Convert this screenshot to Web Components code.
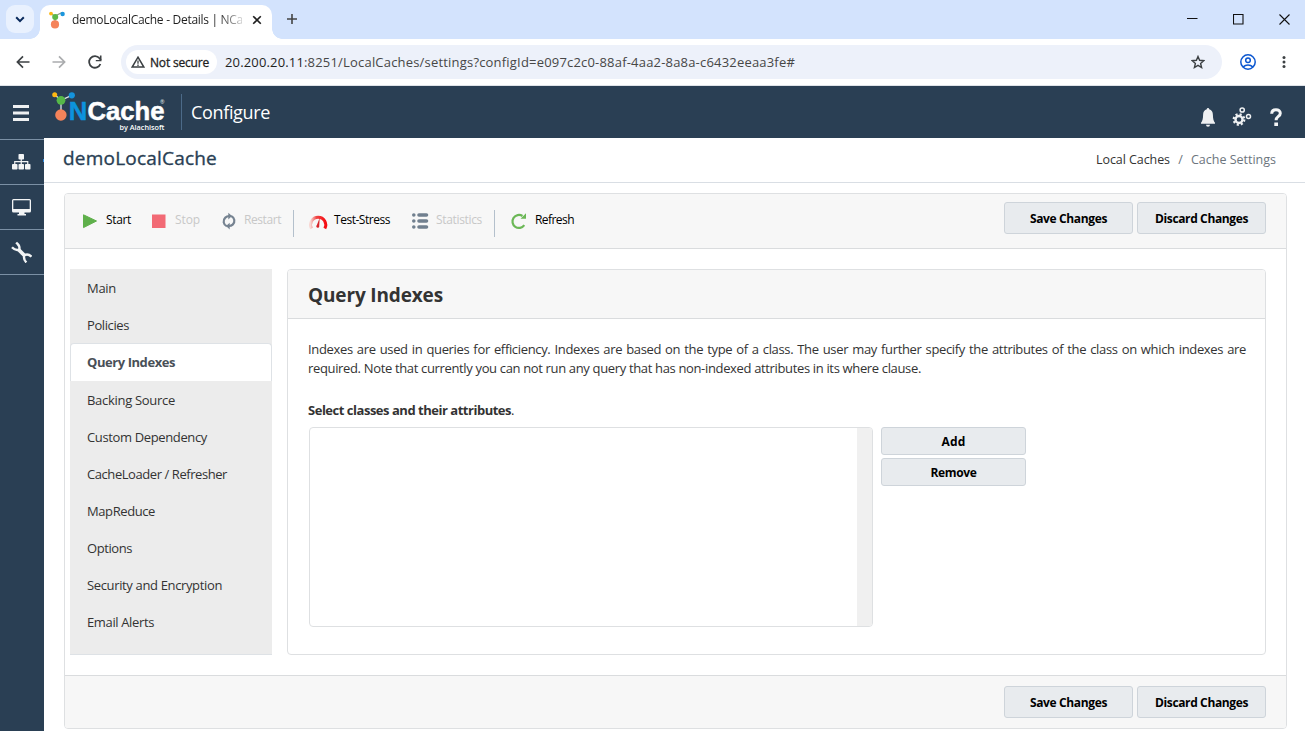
<!DOCTYPE html>
<html lang="en">
<head>
<meta charset="utf-8">
<title>demoLocalCache - Details | NCache</title>
<style>
  html, body {
    margin: 0;
    height: 731px;
    overflow: hidden;
    background: #fff;
  }

  body {
    display: flex;
    flex-direction: column;
    font-family: "Open Sans", "Noto Sans", sans-serif;
    font-size: 13px;
    color: #333;
  }
</style>
</head>
<body>
<browser-tabs></browser-tabs>
<browser-toolbar></browser-toolbar>
<cache-app></cache-app>

<script>
const icons = {
  chevron: `<svg width="10" height="7" viewBox="0 0 10 7"><path d="M1.2 1.3 5 5.1 8.8 1.3" fill="none" stroke="#0a2a5c" stroke-width="2"/></svg>`,
  favicon: `<svg width="18" height="18" viewBox="0 0 18 18"><path d="M2.5 2.5 7 5l7-3.5M7 5v9" stroke="#8a9a8a" stroke-width="1.3" fill="none"/><circle cx="3" cy="2.6" r="1.9" fill="#fdb813"/><circle cx="14.6" cy="3" r="2.2" fill="#1b96dd"/><circle cx="7.2" cy="6" r="3" fill="#5cb947"/><circle cx="7" cy="13.4" r="4.1" fill="#f5835a"/></svg>`,
  close: `<svg width="10" height="10" viewBox="0 0 10 10"><path d="m1.2 1.2 7.6 7.6m0-7.6L1.2 8.8" stroke="#1f1f1f" stroke-width="1.6"/></svg>`,
  plus: `<svg width="12" height="12" viewBox="0 0 12 12"><path d="M6 1v10M1 6h10" stroke="#444" stroke-width="1.6"/></svg>`,
  winMin: `<svg width="11" height="11" viewBox="0 0 11 11"><path d="M0 4.5h10.5" stroke="#111"/></svg>`,
  winMax: `<svg width="11" height="11" viewBox="0 0 11 11"><path d="M.5.5h9.5v9.5H.5z" fill="none" stroke="#111" stroke-width="1.1"/></svg>`,
  winClose: `<svg width="11" height="11" viewBox="0 0 11 11"><path d="m.5.5 10 10m0-10-10 10" stroke="#111" stroke-width="1.1"/></svg>`,
  back: `<svg width="14" height="14" viewBox="0 0 14 14"><path d="M13.5 7H1.5M7 1.4 1.4 7 7 12.6" fill="none" stroke="#3c4043" stroke-width="1.7"/></svg>`,
  forward: `<svg width="14" height="14" viewBox="0 0 14 14"><path d="M.5 7h12M7 1.4 12.6 7 7 12.6" fill="none" stroke="#aaacae" stroke-width="1.7"/></svg>`,
  reload: `<svg width="14" height="14" viewBox="0 0 14 14"><path d="M12.4 9A5.8 5.8 0 1 1 11.5 3.3L13 5" fill="none" stroke="#3c4043" stroke-width="1.8"/><path d="M13.5.5v5.8H7.8V4.9h4.1V.5z" fill="#3c4043"/></svg>`,
  warning: `<svg width="14" height="12" viewBox="0 0 14 12"><path d="M7 1.2 12.8 11H1.2z" fill="none" stroke="#3c4043" stroke-width="1.5"/><path d="M7 4.4v3.4M7 8.5V10" stroke="#3c4043" stroke-width="1.3"/></svg>`,
  star: `<svg width="14" height="14" viewBox="0 0 14 14"><path d="m7 1.5 1.6 3.8 4.2.4-3.2 2.7 1 4.1L7 10.4l-3.6 2.1 1-4.1L1.2 5.7l4.2-.4z" fill="none" stroke="#3c4043" stroke-width="1.4"/></svg>`,
  profile: `<svg width="16" height="16" viewBox="0 0 16 16"><g fill="none" stroke="#0b57d0" stroke-width="1.5"><circle cx="8" cy="8" r="7.2"/><circle cx="8" cy="6.3" r="2.3"/><path d="M3.2 12.9c2.7-2.5 6.9-2.5 9.6 0"/></g></svg>`,
  dots: `<svg width="4" height="12" viewBox="0 0 4 12" fill="#3c4043"><circle cx="2" cy="1.5" r="1.5"/><circle cx="2" cy="6" r="1.5"/><circle cx="2" cy="10.5" r="1.5"/></svg>`,
  menu: `<svg width="16" height="17" viewBox="0 0 16 17"><path d="M0 1.5h16M0 8h16M0 14.5h16" stroke="#eef0f2" stroke-width="3"/></svg>`,
  bell: `<svg width="14" height="19" viewBox="0 0 14 19" fill="#eef0f2"><path d="M7 0c.8 0 1.2.6 1.2 1.3 2.5.6 3.7 2.7 3.7 5.4 0 4.3.8 6.3 2.1 8.1v1H0v-1c1.3-1.8 2.1-3.8 2.1-8.1 0-2.7 1.2-4.8 3.7-5.4C5.8.6 6.2 0 7 0z"/><path d="M5 16.7h4a2 2 0 0 1-4 0z"/></svg>`,
  cogs: `<svg width="20" height="20" viewBox="0 0 20 20"><g fill="none" stroke="#eef0f2"><circle cx="7" cy="12.5" r="3.5" stroke-width="2.4"/><circle cx="7" cy="12.5" r="5.3" stroke-width="2.2" stroke-dasharray="2.08 2.08"/><circle cx="10.2" cy="3" r="2.1" stroke-width="1.5"/><circle cx="16.5" cy="9.5" r="2" stroke-width="1.5"/></g></svg>`,
  help: `<svg width="12" height="19" viewBox="0 0 12 19"><path d="M1.7 5.7C1.8 3 3.5 1.7 6 1.7s4.3 1.3 4.3 3.5c0 3.4-4.2 3-4.2 7" fill="none" stroke="#f4f5f6" stroke-width="3"/><path d="M4.3 14.5H8V18H4.3z" fill="#f4f5f6"/></svg>`,
  sitemap: `<svg width="19" height="16" viewBox="0 0 19 16"><g fill="#f2f4f5"><rect x="6.5" width="5.5" height="5.5" rx=".8"/><rect x="0" y="10" width="5.5" height="5.5" rx=".8"/><rect x="6.5" y="10" width="5.5" height="5.5" rx=".8"/><rect x="13" y="10" width="5.5" height="5.5" rx=".8"/></g><path d="M9.250 5v6M2.750 11V7.7h13V11" fill="none" stroke="#f2f4f5" stroke-width="1.2"/></svg>`,
  monitor: `<svg width="19" height="17" viewBox="0 0 19 17"><path d="M1.5 0h16A1.5 1.5 0 0 1 19 1.5V12a1.5 1.5 0 0 1-1.5 1.5h-5V15H14v1.4H5.5V15H7v-1.5H1.5A1.5 1.5 0 0 1 0 12V1.5A1.5 1.5 0 0 1 1.5 0z" fill="#f2f4f5"/><path d="M1.3 1.3h16.4V10H1.3z" fill="#2a3f54"/></svg>`,
  tools: `<svg width="21" height="22" viewBox="0 0 21 22"><g fill="none" stroke="#f2f4f5" stroke-linejoin="round"><path d="m7.5 8.5 6 6" stroke-width="3.8"/><path d="M5.2 1.5C7 3.500 9.300 4.400 8.300 8.500 5.600 9.600 3.500 8.900 1 6.200" stroke-width="2.4"/><path d="M20.400 15.700c-2.300-2.500-4.400-2.900-7-1.500-.9 2.800-.5 5 2 7.200" stroke-width="2.4"/></g></svg>`,
  play: `<svg width="24" height="24" viewBox="0 0 24 24"><path d="M5.5 5.8 18.5 12 5.5 18.6z" fill="#5fb04b" stroke="#5fb04b" stroke-linejoin="round"/></svg>`,
  stop: `<svg width="24" height="24" viewBox="0 0 24 24"><path d="M5 5.5h13.500V19H5z" fill="#f26a75"/></svg>`,
  restart: `<svg width="24" height="24" viewBox="0 0 24 24"><g transform="translate(1 0)"><g fill="none" stroke="#768391" stroke-width="2.2"><path d="M9.8 17.3A5.3 5.3 0 0 1 8.3 8.6c1.1-1 2.3-1.4 3.8-1.4"/><path d="M14.2 6.9a5.3 5.3 0 0 1 1.5 8.7c-1.1 1-2.3 1.4-3.8 1.4"/></g><path d="M11.3 3.7 15 7.1l-3.7 3.3zM12.7 20.5 9 17.1l3.7-3.3z" fill="#768391"/></g></svg>`,
  gauge: `<svg width="24" height="24" viewBox="0 0 24 24"><defs><linearGradient id="g"><stop offset="0" stop-color="#f8d8d4"/><stop offset=".4" stop-color="#f04444"/><stop offset="1" stop-color="#f60d12"/></linearGradient></defs><path d="M5.500 19.500A7.600 7.600 0 1 1 18.800 19.500" fill="none" stroke="url(#g)" stroke-width="3"/><path d="m13.700 8.800-.5 8.100a1.500 1.500 0 1 1-2.300-.8z" fill="#d8262b"/></svg>`,
  list: `<svg width="24" height="24" viewBox="0 0 24 24"><g stroke="#71808f" stroke-width="3.6" stroke-linecap="round"><path d="M5.8 6h.01M5.8 12h.01M5.8 18h.01"/><path d="M11 6h7.500M11 12h7.500M11 18h7.500"/></g></svg>`,
  refresh: `<svg width="24" height="24" viewBox="0 0 24 24"><path d="M17.300 16.200A6.500 6.500 0 1 1 15.500 7" fill="none" stroke="#6cb857" stroke-width="2.2"/><path d="M19 4.300v5.500h-5.500z" fill="#6cb857"/></svg>`,
  logo: `<svg width="116" height="44" viewBox="50 90 116 44">
    <path d="m54.7 94.7 6.3 5.6 10.700-5M61 100v14" fill="none" stroke="#dfe5e8" stroke-width="1.3"/>
    <circle cx="54.7" cy="94.7" r="2.5" fill="#fdb813"/><circle cx="71.8" cy="95.3" r="3.1" fill="#1493dc"/>
    <circle cx="61" cy="100.3" r="4.4" fill="#56b848"/><circle cx="60.9" cy="115" r="5.7" fill="#f5835a"/>
    <g font-family="Liberation Sans, sans-serif" font-weight="bold" stroke-width=".5">
      <text x="68.7" y="119.700" font-size="25.500" fill="#0c93dd" stroke="#0c93dd" textLength="18.500" lengthAdjust="spacingAndGlyphs">N</text>
      <text x="87.5" y="119.700" font-size="25" fill="#fff" stroke="#fff" textLength="77" lengthAdjust="spacingAndGlyphs">Cache</text>
    </g>
    <text x="160.300" y="104" font-family="Liberation Sans, sans-serif" font-size="5.5" fill="#fff">®</text>
    <text x="119.500" y="130" font-family="Open Sans, sans-serif" font-weight="600" font-size="7.500" fill="#fff" textLength="45" lengthAdjust="spacingAndGlyphs">by Alachisoft</text>
  </svg>`,
};

// Single line of text whose tracking is adjusted to the width in its "w" attribute
class FitText extends HTMLElement {
  constructor() {
    super();
    this.attachShadow({ mode: "open" }).innerHTML =
      `<style>:host { display: inline-block; white-space: nowrap; flex: none; }</style><slot></slot>`;
  }

  connectedCallback() {
    const target = Number(this.getAttribute("w"));
    const natural = this.getBoundingClientRect().width;
    const count = this.textContent.length;
    if (target && natural) {
      this.style.letterSpacing = (target - natural) / count + "px";
    }
  }
}

class AppIcon extends HTMLElement {
  constructor() {
    super();
    this.attachShadow({ mode: "open" });
  }

  connectedCallback() {
    this.shadowRoot.innerHTML = `
      <style>
        :host { display: inline-flex; flex: none; }
        svg { display: block; }
      </style>
      ${icons[this.getAttribute("name")]}`;
  }
}

class BrowserTabs extends HTMLElement {
  constructor() {
    super();
    this.attachShadow({ mode: "open" }).innerHTML = `
      <style>
        :host {
          display: flex;
          flex: none;
          height: 39px;
          background: #d3e3fd;
          color: #1f1f1f;
          font-size: 12px;
          --tab: #fff;
        }
        .search {
          display: flex;
          align-items: center;
          justify-content: center;
          width: 28px;
          height: 28px;
          margin: 5px 6px 0;
          border-radius: 9px;
          background: #e9f1fe;
        }
        .tab {
          display: flex;
          align-items: center;
          box-sizing: border-box;
          position: relative;
          width: 232px;
          height: 34px;
          margin-top: 5px;
          padding: 0 10px 5px 8px;
          border-radius: 10px 10px 0 0;
          background: var(--tab);
        }
        /* curved feet of the active tab */
        .tab::before, .tab::after {
          content: "";
          position: absolute;
          bottom: 0;
          width: 10px;
          height: 10px;
        }
        .tab::before { left: -10px; background: radial-gradient(circle at 0 0, transparent 9.5px, var(--tab) 10px); }
        .tab::after { right: -10px; background: radial-gradient(circle at 100% 0, transparent 9.5px, var(--tab) 10px); }
        .title {
          width: 170px;
          margin: 0 10px 0 6px;
          overflow: hidden;
          -webkit-mask-image: linear-gradient(90deg, #000 146px, transparent 176px);
          mask-image: linear-gradient(90deg, #000 146px, transparent 176px);
        }
        .plus { margin: 13px 0 0 14px; }
        .window {
          display: flex;
          gap: 35px;
          margin: 14px 15px 0 auto;
        }
      </style>
      <div class="search"><app-icon name="chevron"></app-icon></div>
      <div class="tab">
        <app-icon name="favicon"></app-icon>
        <div class="title"><fit-text w="171">demoLocalCache - Details | NCa</fit-text></div>
        <app-icon name="close"></app-icon>
      </div>
      <app-icon class="plus" name="plus"></app-icon>
      <div class="window">
        <app-icon name="winMin"></app-icon>
        <app-icon name="winMax"></app-icon>
        <app-icon name="winClose"></app-icon>
      </div>`;
  }
}

class BrowserToolbar extends HTMLElement {
  constructor() {
    super();
    this.attachShadow({ mode: "open" }).innerHTML = `
      <style>
        :host {
          display: flex;
          align-items: center;
          flex: none;
          box-sizing: border-box;
          height: 47px;
          padding: 0 19px 0 16px;
          border-bottom: 1px solid #dfe3e8;
          background: #fff;
        }
        .nav { display: flex; gap: 22px; width: 105px; }
        .omnibox {
          display: flex;
          align-items: center;
          box-sizing: border-box;
          width: 1101px;
          height: 34px;
          padding: 0 17px 0 5px;
          border-radius: 17px;
          background: #edf1fa;
          color: #474747;
        }
        .chip {
          display: flex;
          align-items: center;
          gap: 5px;
          box-sizing: border-box;
          width: 91px;
          height: 24px;
          margin-right: 8px;
          padding-left: 5px;
          border-radius: 12px;
          background: #fff;
          color: #1f1f1f;
          font-size: 12px;
          -webkit-text-stroke: 0.3px;
        }
        .host { color: #1f1f1f; }
        .star { margin-left: auto; }
        .profile { margin: 0 26px 0 18px; }
      </style>
      <div class="nav">
        <app-icon name="back"></app-icon>
        <app-icon name="forward"></app-icon>
        <app-icon name="reload"></app-icon>
      </div>
      <div class="omnibox">
        <div class="chip"><app-icon name="warning"></app-icon><fit-text w="59">Not secure</fit-text></div>
        <fit-text class="host" w="79">20.200.20.11</fit-text><fit-text w="491">:8251/LocalCaches/settings?configId=e097c2c0-88af-4aa2-8a8a-c6432eeaa3fe#</fit-text>
        <app-icon class="star" name="star"></app-icon>
      </div>
      <app-icon class="profile" name="profile"></app-icon>
      <app-icon name="dots"></app-icon>`;
  }
}

class AppHeader extends HTMLElement {
  constructor() {
    super();
    this.attachShadow({ mode: "open" }).innerHTML = `
      <style>
        :host {
          display: flex;
          align-items: center;
          flex: none;
          box-sizing: border-box;
          height: 52px;
          padding: 0 23px 0 13px;
          background: #2a3f54;
          color: #fff;
          font-size: 18px;
        }
        .menu { margin: 2px 21px 0 0; }
        .title {
          display: flex;
          align-items: center;
          height: 36px;
          margin-left: 15px;
          padding-left: 9px;
          border-left: 1px solid #4c6a88;
        }
        .right {
          display: flex;
          align-items: center;
          gap: 17px;
          margin: 10px 0 0 auto;
        }
        .help { margin-left: 1px; }
      </style>
      <app-icon class="menu" name="menu"></app-icon>
      <app-icon name="logo"></app-icon>
      <div class="title"><fit-text w="79">Configure</fit-text></div>
      <div class="right">
        <app-icon name="bell"></app-icon>
        <app-icon name="cogs"></app-icon>
        <app-icon class="help" name="help"></app-icon>
      </div>`;
  }
}

class SideNav extends HTMLElement {
  constructor() {
    super();
    this.attachShadow({ mode: "open" }).innerHTML = `
      <style>
        :host {
          display: flex;
          flex-direction: column;
          flex: none;
          box-sizing: border-box;
          width: 44px;
          padding-top: 1px;
          background: #2a3f54;
        }
        div {
          display: flex;
          align-items: center;
          justify-content: center;
          box-sizing: border-box;
          height: 45px;
          padding-right: 2px;
          border-top: 1px solid #7b90a5;
        }
        div:last-child { height: 1px; }
        /* marks the section that is open */
        .open { position: relative; }
        .open::after {
          content: "";
          position: absolute;
          top: 19px;
          right: 0;
          width: 1px;
          height: 3px;
          background: #2f8be0;
        }
      </style>
      <div class="open"><app-icon name="sitemap"></app-icon></div>
      <div><app-icon name="monitor"></app-icon></div>
      <div><app-icon name="tools"></app-icon></div>
      <div></div>`;
  }
}

class PageTitle extends HTMLElement {
  constructor() {
    super();
    this.attachShadow({ mode: "open" }).innerHTML = `
      <style>
        :host {
          display: flex;
          align-items: center;
          flex: none;
          box-sizing: border-box;
          height: 45px;
          padding: 0 29px 2px 19px;
          border-bottom: 1px solid #d9dee4;
          color: #2a3f54;
        }
        .name {
          margin-bottom: 2px;
          font-size: 19px;
          -webkit-text-stroke: 0.35px;
        }
        .crumbs { display: flex; margin-left: auto; font-size: 12.5px; color: #333; }
        .crumbs span { width: 21px; text-align: center; color: #6c757d; }
        .crumbs .current { color: #6c757d; }
      </style>
      <fit-text class="name" w="154">demoLocalCache</fit-text>
      <div class="crumbs">
        <fit-text w="74">Local Caches</fit-text><span>/</span><fit-text class="current" w="85">Cache Settings</fit-text>
      </div>`;
  }
}

class ActionButton extends HTMLElement {
  constructor() {
    super();
    this.attachShadow({ mode: "open" }).innerHTML = `
      <style>
        :host { display: inline-flex; width: 129px; height: 32px; }
        button {
          width: 100%;
          height: 100%;
          padding: 0;
          border: 1px solid #ced4da;
          border-radius: 3px;
          background: #e8ebee;
          color: #000;
          font: bold 12px "Open Sans", "Noto Sans", sans-serif;
        }
      </style>
      <button><slot></slot></button>`;
  }
}

class ToolItem extends HTMLElement {
  constructor() {
    super();
    this.attachShadow({ mode: "open" });
  }

  connectedCallback() {
    this.shadowRoot.innerHTML = `
      <style>
        :host {
          display: flex;
          align-items: center;
          gap: 4px;
          height: 24px;
          color: #000;
          font-size: 12px;
        }
        :host([disabled]) { color: #c8c8c8; }
        .label { padding-bottom: 2px; }
      </style>
      <app-icon name="${this.getAttribute("icon")}"></app-icon>
      <div class="label"><slot></slot></div>`;
  }
}

class SettingsToolbar extends HTMLElement {
  constructor() {
    super();
    this.attachShadow({ mode: "open" }).innerHTML = `
      <style>
        :host {
          display: flex;
          box-sizing: border-box;
          height: 55px;
          padding: 8px 20px 0 13px;
          border-bottom: 1px solid #dadcde;
          background: #f7f7f7;
        }
        .tools { display: flex; align-items: center; height: 37px; }
        .tools > * { flex: none; }
        .tools i { width: 1px; height: 27px; margin-top: 5px; background: #b4c0cc; }
        .save { display: flex; gap: 4px; margin-left: auto; }
      </style>
      <div class="tools">
        <tool-item icon="play" style="width:69px"><fit-text w="25">Start</fit-text></tool-item>
        <tool-item icon="stop" disabled style="width:69px"><fit-text w="25">Stop</fit-text></tool-item>
        <tool-item icon="restart" disabled style="width:77px"><fit-text w="37">Restart</fit-text></tool-item>
        <i></i>
        <tool-item icon="gauge" style="width:102px;margin-left:12px"><fit-text w="56">Test-Stress</fit-text></tool-item>
        <tool-item icon="list" disabled style="width:86px"><fit-text w="46">Statistics</fit-text></tool-item>
        <i></i>
        <tool-item icon="refresh" style="margin-left:12px"><fit-text w="39">Refresh</fit-text></tool-item>
      </div>
      <div class="save">
        <action-button><fit-text w="77">Save Changes</fit-text></action-button>
        <action-button><fit-text w="93">Discard Changes</fit-text></action-button>
      </div>`;
  }
}

class SettingsMenu extends HTMLElement {
  constructor() {
    super();
    const items = [
      ["Main", 29],
      ["Policies", 42],
      ["Query Indexes", 88],
      ["Backing Source", 88],
      ["Custom Dependency", 120],
      ["CacheLoader / Refresher", 140],
      ["MapReduce", 68],
      ["Options", 45],
      ["Security and Encryption", 135],
      ["Email Alerts", 67],
    ];
    this.attachShadow({ mode: "open" }).innerHTML = `
      <style>
        :host {
          display: flex;
          flex-direction: column;
          flex: none;
          box-sizing: border-box;
          width: 202px;
          height: 386px;
          border-bottom: 1px solid #dee2e6;
          background: #ececec;
        }
        div {
          display: flex;
          align-items: center;
          height: 37px;
          padding-left: 17px;
        }
        .active {
          box-sizing: border-box;
          height: 38px;
          padding: 0 0 1px 16px;
          border: 1px solid #dee2e6;
          border-bottom: none;
          border-radius: 4px 4px 0 0;
          background: #fff;
          color: #495057;
          font-weight: bold;
        }
      </style>
      ${items.map(([label, w]) => `
        <div${label === "Query Indexes" ? ' class="active"' : ""}><fit-text w="${w}">${label}</fit-text></div>`).join("")}`;
  }
}

class QueryIndexes extends HTMLElement {
  constructor() {
    super();
    this.attachShadow({ mode: "open" }).innerHTML = `
      <style>
        :host {
          display: block;
          box-sizing: border-box;
          width: 979px;
          height: 386px;
          border: 1px solid #dee0e2;
          border-radius: 4px;
          overflow: hidden;
          line-height: 19px;
        }
        header {
          display: flex;
          align-items: center;
          box-sizing: border-box;
          height: 49px;
          padding: 2px 20px 0;
          border-bottom: 1px solid #dadcde;
          background: #f7f7f7;
          font-size: 19px;
          font-weight: bold;
        }
        .body { display: flex; flex-direction: column; padding: 21px 20px 0; }
        .wide {
          width: 938px;
          letter-spacing: -0.34px;
          text-align-last: justify;
          white-space: nowrap;
        }
        .label { margin-top: 23px; font-weight: bold; height: 19px; }
        .label span { font-weight: normal; }
        .row { display: flex; gap: 8px; margin: 7px 0 0 1px; }
        .list {
          display: flex;
          justify-content: flex-end;
          box-sizing: border-box;
          width: 564px;
          height: 200px;
          border: 1px solid #dee0e2;
          border-radius: 4px;
          overflow: hidden;
        }
        .list::after { content: ""; width: 15px; background: #f0f0f0; }
        .buttons { display: flex; flex-direction: column; gap: 3px; }
        .buttons action-button { width: 145px; height: 28px; }
      </style>
      <header><fit-text w="135">Query Indexes</fit-text></header>
      <div class="body">
        <div class="wide">Indexes are used in queries for efficiency. Indexes are based on the type of a class. The user may further specify the attributes of the class on which indexes are</div>
        <div><fit-text w="613">required. Note that currently you can not run any query that has non-indexed attributes in its where clause.</fit-text></div>
        <div class="label"><fit-text w="206">Select classes and their attributes<span>.</span></fit-text></div>
        <div class="row">
          <div class="list"></div>
          <div class="buttons">
            <action-button><fit-text w="24">Add</fit-text></action-button>
            <action-button><fit-text w="46">Remove</fit-text></action-button>
          </div>
        </div>
      </div>`;
  }
}

class SettingsCard extends HTMLElement {
  constructor() {
    super();
    this.attachShadow({ mode: "open" }).innerHTML = `
      <style>
        :host {
          display: flex;
          flex-direction: column;
          box-sizing: border-box;
          width: 1223px;
          height: 536px;
          margin: 10px 0 0 20px;
          border: 1px solid #dee0e2;
          border-radius: 4px;
          overflow: hidden;
        }
        .content { display: flex; gap: 15px; flex: 1; padding: 20px 0 0 5px; }
        footer {
          display: flex;
          justify-content: flex-end;
          gap: 4px;
          box-sizing: border-box;
          height: 53px;
          padding: 10px 20px 0;
          border-top: 1px solid #dadcde;
          background: #f7f7f7;
        }
      </style>
      <settings-toolbar></settings-toolbar>
      <div class="content">
        <settings-menu></settings-menu>
        <query-indexes></query-indexes>
      </div>
      <footer>
        <action-button><fit-text w="77">Save Changes</fit-text></action-button>
        <action-button><fit-text w="93">Discard Changes</fit-text></action-button>
      </footer>`;
  }
}

class CacheApp extends HTMLElement {
  constructor() {
    super();
    this.attachShadow({ mode: "open" }).innerHTML = `
      <style>
        :host { display: flex; flex-direction: column; flex: 1; }
        .page { display: flex; flex: 1; }
        main { display: flex; flex-direction: column; flex: 1; }
      </style>
      <app-header></app-header>
      <div class="page">
        <side-nav></side-nav>
        <main>
          <page-title></page-title>
          <settings-card></settings-card>
        </main>
      </div>`;
  }
}

customElements.define("browser-tabs", BrowserTabs);
customElements.define("browser-toolbar", BrowserToolbar);
customElements.define("cache-app", CacheApp);
customElements.define("app-header", AppHeader);
customElements.define("side-nav", SideNav);
customElements.define("page-title", PageTitle);
customElements.define("settings-card", SettingsCard);
customElements.define("settings-toolbar", SettingsToolbar);
customElements.define("settings-menu", SettingsMenu);
customElements.define("query-indexes", QueryIndexes);
customElements.define("action-button", ActionButton);
customElements.define("tool-item", ToolItem);
customElements.define("app-icon", AppIcon);
customElements.define("fit-text", FitText);
</script>
</body>
</html>
